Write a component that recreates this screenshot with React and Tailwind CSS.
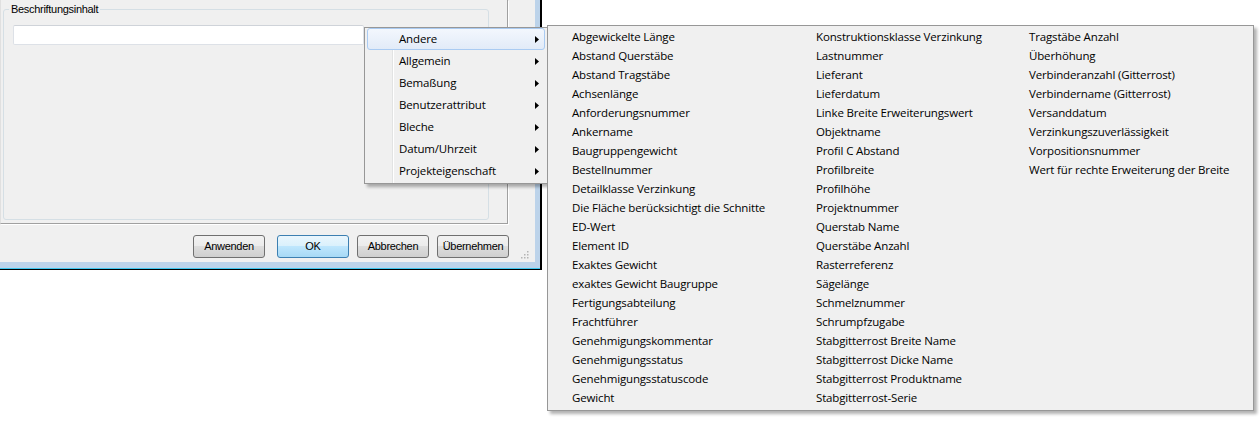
const groups = [
  "Andere",
  "Allgemein",
  "Bemaßung",
  "Benutzerattribut",
  "Bleche",
  "Datum/Uhrzeit",
  "Projekteigenschaft",
];

const columns = [
  [
    "Abgewickelte Länge",
    "Abstand Querstäbe",
    "Abstand Tragstäbe",
    "Achsenlänge",
    "Anforderungsnummer",
    "Ankername",
    "Baugruppengewicht",
    "Bestellnummer",
    "Detailklasse Verzinkung",
    "Die Fläche berücksichtigt die Schnitte",
    "ED-Wert",
    "Element ID",
    "Exaktes Gewicht",
    "exaktes Gewicht Baugruppe",
    "Fertigungsabteilung",
    "Frachtführer",
    "Genehmigungskommentar",
    "Genehmigungsstatus",
    "Genehmigungsstatuscode",
    "Gewicht",
  ],
  [
    "Konstruktionsklasse Verzinkung",
    "Lastnummer",
    "Lieferant",
    "Lieferdatum",
    "Linke Breite Erweiterungswert",
    "Objektname",
    "Profil C Abstand",
    "Profilbreite",
    "Profilhöhe",
    "Projektnummer",
    "Querstab Name",
    "Querstäbe Anzahl",
    "Rasterreferenz",
    "Sägelänge",
    "Schmelznummer",
    "Schrumpfzugabe",
    "Stabgitterrost Breite Name",
    "Stabgitterrost Dicke Name",
    "Stabgitterrost Produktname",
    "Stabgitterrost-Serie",
  ],
  [
    "Tragstäbe Anzahl",
    "Überhöhung",
    "Verbinderanzahl (Gitterrost)",
    "Verbindername (Gitterrost)",
    "Versanddatum",
    "Verzinkungszuverlässigkeit",
    "Vorpositionsnummer",
    "Wert für rechte Erweiterung der Breite",
  ],
];

function Arrow() {
  return (
    <svg width="4" height="7" viewBox="0 0 4 7" className="ml-auto shrink-0">
      <polygon points="0,0 4,3.5 0,7" fill="#000" />
    </svg>
  );
}

function DlgButton({ label, primary }) {
  return (
    <button
      className={
        "w-[72px] h-[23px] rounded-[3px] border text-[11px] tracking-[-0.3px] text-black flex items-center justify-center " +
        (primary
          ? "border-[#3c7fb1] bg-[linear-gradient(#eaf6fd,#d9f0fc_50%,#bee6fd_50%,#a7d9f5)]"
          : "border-[#707070] bg-[linear-gradient(#f2f2f2,#ebebeb_50%,#dddddd_50%,#cfcfcf)]")
      }
    >
      {label}
    </button>
  );
}

function SizeGrip() {
  return (
    <svg width="9" height="9" viewBox="0 0 9 9">
      {[
        [7, 1],
        [7, 4],
        [4, 4],
        [7, 7],
        [4, 7],
        [1, 7],
      ].map(([x, y]) => (
        <rect key={x + "-" + y} x={x} y={y} width="1.5" height="1.5" fill="#b4b4b4" />
      ))}
    </svg>
  );
}

export default function App() {
  return (
    <div className="relative w-[1260px] h-[434px] bg-white overflow-hidden font-['Liberation_Sans',Arial,sans-serif]">
      {/* dialog */}
      <div className="w-[542px] border-r-2 border-b border-black">
        <div className="border-b border-[#3fc6ef]">
          <div className="bg-[#bcd3ea] pr-[5px] pb-[6px]">
            <div className="h-[262px] bg-[#f0f0f0] flex flex-col">
              <div className="w-[508px] h-[224px] pt-[3px] pl-[2px] border-l border-l-[#e0e0e0] border-r border-b border-[#a0a0a0] shadow-[1px_1px_0_#ffffff]">
                <fieldset className="w-[486px] h-[217px] border border-[#d5dfe5] rounded-[3px]">
                  <legend className="ml-[5px] px-[2px] text-[11px] leading-[13px] tracking-[-0.3px] text-black">
                    Beschriftungsinhalt
                  </legend>
                  <div className="ml-[9px] mt-[9px] w-[351px] h-[20px] bg-white border border-[#dde1e7] border-t-[#cfd3d9] rounded-[2px]" />
                </fieldset>
              </div>
              <div className="flex items-start mt-[11px] pl-[193px]">
                <DlgButton label="Anwenden" />
                <div className="ml-[12px]">
                  <DlgButton label="OK" primary />
                </div>
                <div className="ml-[8px]">
                  <DlgButton label="Abbrechen" />
                </div>
                <div className="ml-[8px]">
                  <DlgButton label="Übernehmen" />
                </div>
                <div className="ml-[11px] mt-[15px]">
                  <SizeGrip />
                </div>
              </div>
            </div>
          </div>
        </div>
      </div>

      {/* context menu */}
      <div className="absolute left-[364px] top-[27px] w-[184px] px-[2px] pb-px border border-[#979797] bg-[#f0f0f0] bg-[linear-gradient(to_right,transparent_27px,#e2e3e3_27px,#e2e3e3_28px,#ffffff_28px,#ffffff_29px,transparent_29px)] shadow-[3px_3px_3px_rgba(0,0,0,0.3)] font-['Open_Sans',sans-serif] text-[11.5px] tracking-[-0.15px] text-black">
        {groups.map((g, i) => (
          <div
            key={g}
            className={
              "h-[22px] flex items-center pl-[31px] pr-[5px] rounded-[3px] border " +
              (i === 0
                ? "border-[#aacbf2] bg-[linear-gradient(#f3f7fd,#e2ebf8)]"
                : "border-transparent")
            }
          >
            <span>{g}</span>
            <Arrow />
          </div>
        ))}
      </div>

      {/* submenu */}
      <div className="absolute left-[547px] top-[25px] w-[707px] pt-[1px] pb-[3px] pl-[24px] border border-[#979797] bg-[#f0f0f0] shadow-[3px_3px_3px_rgba(0,0,0,0.3)] font-['Open_Sans',sans-serif] text-[11.5px] tracking-[-0.15px] text-black grid grid-cols-[244px_213px_1fr] items-start">
        {columns.map((col, ci) => (
          <div key={ci} className="flex flex-col">
            {col.map((t) => (
              <div key={t} className="h-[19px] flex items-center whitespace-nowrap">
                {t}
              </div>
            ))}
          </div>
        ))}
      </div>
    </div>
  );
}
